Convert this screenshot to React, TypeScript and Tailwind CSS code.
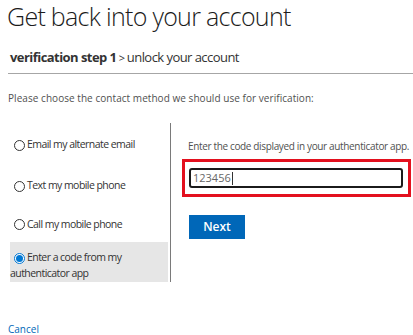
import React from "react";

function Radio({ checked }: { checked?: boolean }) {
  return (
    <span
      className={
        "mr-[2px] inline-flex h-[11px] w-[11px] shrink-0 items-center justify-center rounded-full border bg-white align-[-1px] " +
        (checked ? "border-[#0078d4]" : "border-[#333333]")
      }
    >
      {checked && <span className="h-[7px] w-[7px] rounded-full bg-[#0078d4]" />}
    </span>
  );
}

export default function App() {
  return (
    <div className="h-[335px] w-[413px] overflow-hidden bg-white font-['Open_Sans',sans-serif] text-[#333]">
      {/* Heading */}
      <h1 className="pl-[7px] pt-px text-[25px] font-light leading-[31px] tracking-[-0.7px] text-[#1b1b1b]">
        Get back into your account
      </h1>

      <div className="mt-[15px] pl-[10px] text-[13px] leading-[20px] tracking-[-0.55px] text-[#333]">
        <span className="font-bold">verification step 1</span>
        <span className="text-[11px]"> &gt; </span>
        <span>unlock your account</span>
      </div>
      <div className="ml-[8px] mt-[5px] border-t border-[#a6a6a6]" />

      <p className="mt-[17px] pl-[8px] text-[10px] leading-[14px] tracking-[0.05px] text-[#505050]">
        Please choose the contact method we should use for verification:
      </p>

      {/* Methods + code entry */}
      <div className="mt-[18px] flex">
        <div className="h-[159px] w-[171px] shrink-0 border-r border-[#7a7a7a] pl-[10px] pr-[2px] pt-[2px] text-[10.5px] tracking-[-0.55px] text-[#333]">
          <label className="flex h-[40px] items-center pl-[4px]">
            <Radio />
            Email my alternate email
          </label>
          <label className="flex h-[42px] items-center pl-[4px]">
            <Radio />
            Text my mobile phone
          </label>
          <label className="flex h-[35px] items-center pl-[4px]">
            <Radio />
            Call my mobile phone
          </label>
          <label className="block bg-[#e6e6e6] pb-[1px] pl-[4px] pt-[7px] leading-[16px]">
            <Radio checked />
            Enter a code from my
            <span className="-ml-[4px] block">authenticator app</span>
          </label>
        </div>

        <div className="pl-[11px] pt-[15px]">
          <p className="whitespace-nowrap pl-[6px] text-[10px] leading-[16px] tracking-[-0.35px] text-[#505050]">
            Enter the code displayed in your authenticator app.
          </p>
          <div className="mt-[5px] w-[229px] border-[3px] border-[#e3101e] pb-[6px] pl-[4px] pr-[5px] pt-[6px]">
            <div className="flex h-[20px] items-center rounded-[3px] border-2 border-[#1b1b1b] pl-[2px] text-[11px] text-[#666]">
              123456
              <span className="ml-px h-[13px] w-px bg-[#333]" />
            </div>
          </div>
          <button className="ml-[7px] mt-[18px] h-[24px] w-[56px] bg-[#0067b8] text-[12px] font-semibold text-white">
            Next
          </button>
        </div>
      </div>

      <a className="mt-[40px] block pl-[8px] text-[10px] leading-[14px] text-[#0067b8]">Cancel</a>
    </div>
  );
}
